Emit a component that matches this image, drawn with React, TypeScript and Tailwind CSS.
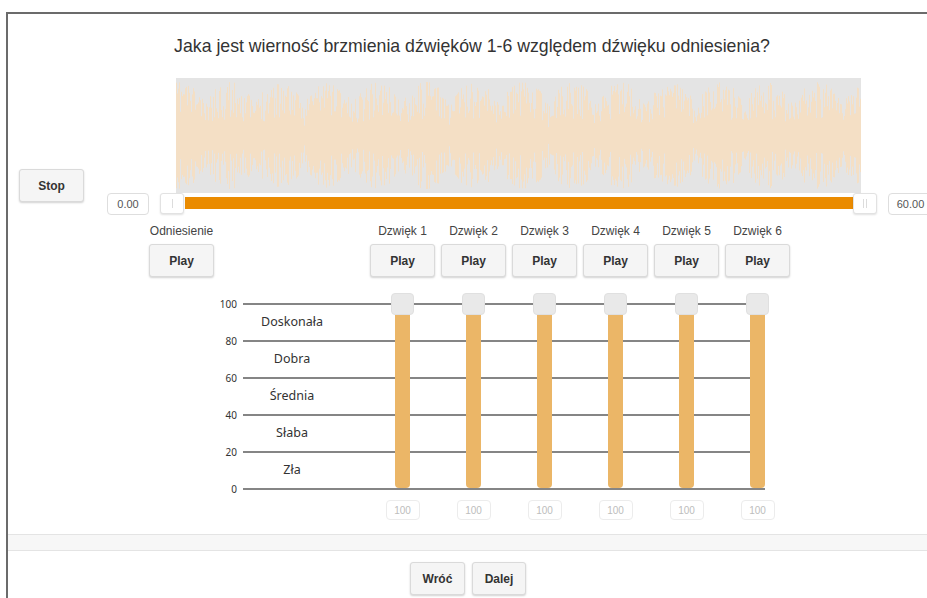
const SOUNDS = [1, 2, 3, 4, 5, 6]
const BANDS = ["Doskonała", "Dobra", "Średnia", "Słaba", "Zła"]
const TICKS = [100, 80, 60, 40, 20]

// waveform of the reference clip, drawn as one stroked path of thin columns
function wavePath() {
    let seed = 11
    const rnd = () => {
        seed = (seed * 16807) % 2147483647
        return seed / 2147483647
    }
    const mid = 57.5
    let d = ""
    for (let x = 0; x < 685; x++) {
        const env = 0.5 + 0.5 * Math.pow(Math.abs(Math.sin((Math.PI * (x + 20)) / 49)), 0.6)
        const h = env * (1 - 0.7 * Math.pow(rnd(), 1.5)) * (mid - 4)
        d += `M${x + 0.5} ${(mid - h).toFixed(1)}V${(mid + h).toFixed(1)}`
    }
    return d
}

const WAVE = wavePath()

const btn =
    "h-[33px] rounded-[3px] border border-[#dadada] bg-[#f5f5f5] shadow-[0_1px_2px_rgba(0,0,0,0.18)] text-[12px] font-bold text-[#333]"

const Handle = ({ double }: { double?: boolean }) => (
    <div className="flex h-[21px] w-[24px] items-center justify-center gap-[2px] rounded-[3px] border border-[#e2e2e2] bg-white shadow-[0_1px_2px_rgba(0,0,0,0.12)]">
        <div className="h-[9px] w-px bg-[#dcdcdc]" />
        {double && <div className="h-[9px] w-px bg-[#dcdcdc]" />}
    </div>
)

const App = () => {
    return (
        <div className="h-[598px] w-[927px] overflow-hidden bg-white font-['Liberation_Sans',Arial,sans-serif] text-[#333]">
            <div className="ml-[6px] mt-[12px] h-[600px] w-[930px] border-l-2 border-t-2 border-[#6b6b6b]">
                <h1 className="pt-[21px] text-center text-[17.7px] leading-[22px] text-[#333]">
                    Jaka jest wierność brzmienia dźwięków 1-6 względem dźwięku odniesienia?
                </h1>

                {/* player: stop button, waveform and range slider */}
                <div className="mt-[21px] flex items-end">
                    <button className={`${btn} mb-[13px] ml-[11px] w-[65px]`}>Stop</button>
                    <div className="ml-[23px] flex flex-col">
                        <svg className="ml-[69px] block" width="685" height="115" viewBox="0 0 685 115">
                            <rect width="685" height="115" fill="#e4e4e4" />
                            <path d={WAVE} stroke="#f4dfc5" strokeWidth="1" />
                        </svg>
                        <div className="flex h-[22px] items-center">
                            <div className="flex h-[22px] w-[42px] items-center justify-center rounded-[4px] border border-[#dedede] text-[11px] text-[#555]">
                                0.00
                            </div>
                            <div className="relative ml-[11px] h-[22px] w-[717px]">
                                <div className="absolute left-[25px] right-[24px] top-[4px] h-[12px] bg-[#ea8b00]" />
                                <div className="absolute left-0 top-0">
                                    <Handle />
                                </div>
                                <div className="absolute right-0 top-0">
                                    <Handle double />
                                </div>
                            </div>
                            <div className="ml-[11px] flex h-[22px] w-[45px] items-center justify-center rounded-[4px] border border-[#dedede] text-[11px] text-[#555]">
                                60.00
                            </div>
                        </div>
                    </div>
                </div>

                {/* play buttons */}
                <div className="ml-[141px] mt-[8px] flex">
                    <div className="flex w-[65px] flex-col items-center">
                        <span className="text-[12px] leading-[16px] text-[#444]">Odniesienie</span>
                        <button className={`${btn} mt-[5px] w-[65px]`}>Play</button>
                    </div>
                    <div className="ml-[156px] flex gap-[6px]">
                        {SOUNDS.map((n) => (
                            <div key={n} className="flex w-[65px] flex-col items-center">
                                <span className="text-[12px] leading-[16px] text-[#444]">Dzwięk {n}</span>
                                <button className={`${btn} mt-[5px] w-[65px]`}>Play</button>
                            </div>
                        ))}
                    </div>
                </div>

                {/* rating scale */}
                <div className="relative ml-[192px] mt-[26px] font-['Noto_Sans',sans-serif]">
                    {TICKS.map((t, i) => (
                        <div key={t} className="flex h-[37px]">
                            <span className="-mt-[6px] block w-[37px] text-right text-[10px] leading-[14px] text-[#333]">
                                {t}
                            </span>
                            <div className="ml-[6px] flex w-[518px] items-center border-t-2 border-[#858585]">
                                <span className="w-[98px] text-center text-[12.5px] text-[#333]">{BANDS[i]}</span>
                            </div>
                        </div>
                    ))}
                    <div className="flex h-[2px]">
                        <span className="-mt-[6px] block w-[37px] text-right text-[10px] leading-[14px] text-[#333]">0</span>
                        <div className="ml-[6px] w-[522px] border-t-2 border-[#858585]" />
                    </div>

                    <div className="absolute left-[170px] top-[-10px] flex gap-[6px]">
                        {SOUNDS.map((n) => (
                            <div key={n} className="flex w-[65px] flex-col items-center">
                                <div className="relative z-10 h-[22px] w-[23px] rounded-[4px] border border-[#e0e0e0] bg-[#e9e9e9]" />
                                <div className="-mt-[1px] h-[174px] w-[15px] rounded-b-[4px] bg-[#ebb667]" />
                            </div>
                        ))}
                    </div>
                </div>

                <div className="ml-[362px] mt-[10px] flex gap-[6px]">
                    {SOUNDS.map((n) => (
                        <div key={n} className="flex w-[65px] justify-center">
                            <div className="flex h-[20px] w-[34px] items-center justify-center rounded-[4px] border border-[#ececec] text-[10px] text-[#bdbdbd]">
                                100
                            </div>
                        </div>
                    ))}
                </div>

                <div className="mt-[14px] h-[17px] border-y border-[#e4e4e4] bg-[#f7f7f7]" />

                <div className="ml-[402px] mt-[11px] flex gap-[7px]">
                    <button className={`${btn} w-[55px]`}>Wróć</button>
                    <button className={`${btn} w-[54px]`}>Dalej</button>
                </div>
            </div>
        </div>
    )
}

export default App
